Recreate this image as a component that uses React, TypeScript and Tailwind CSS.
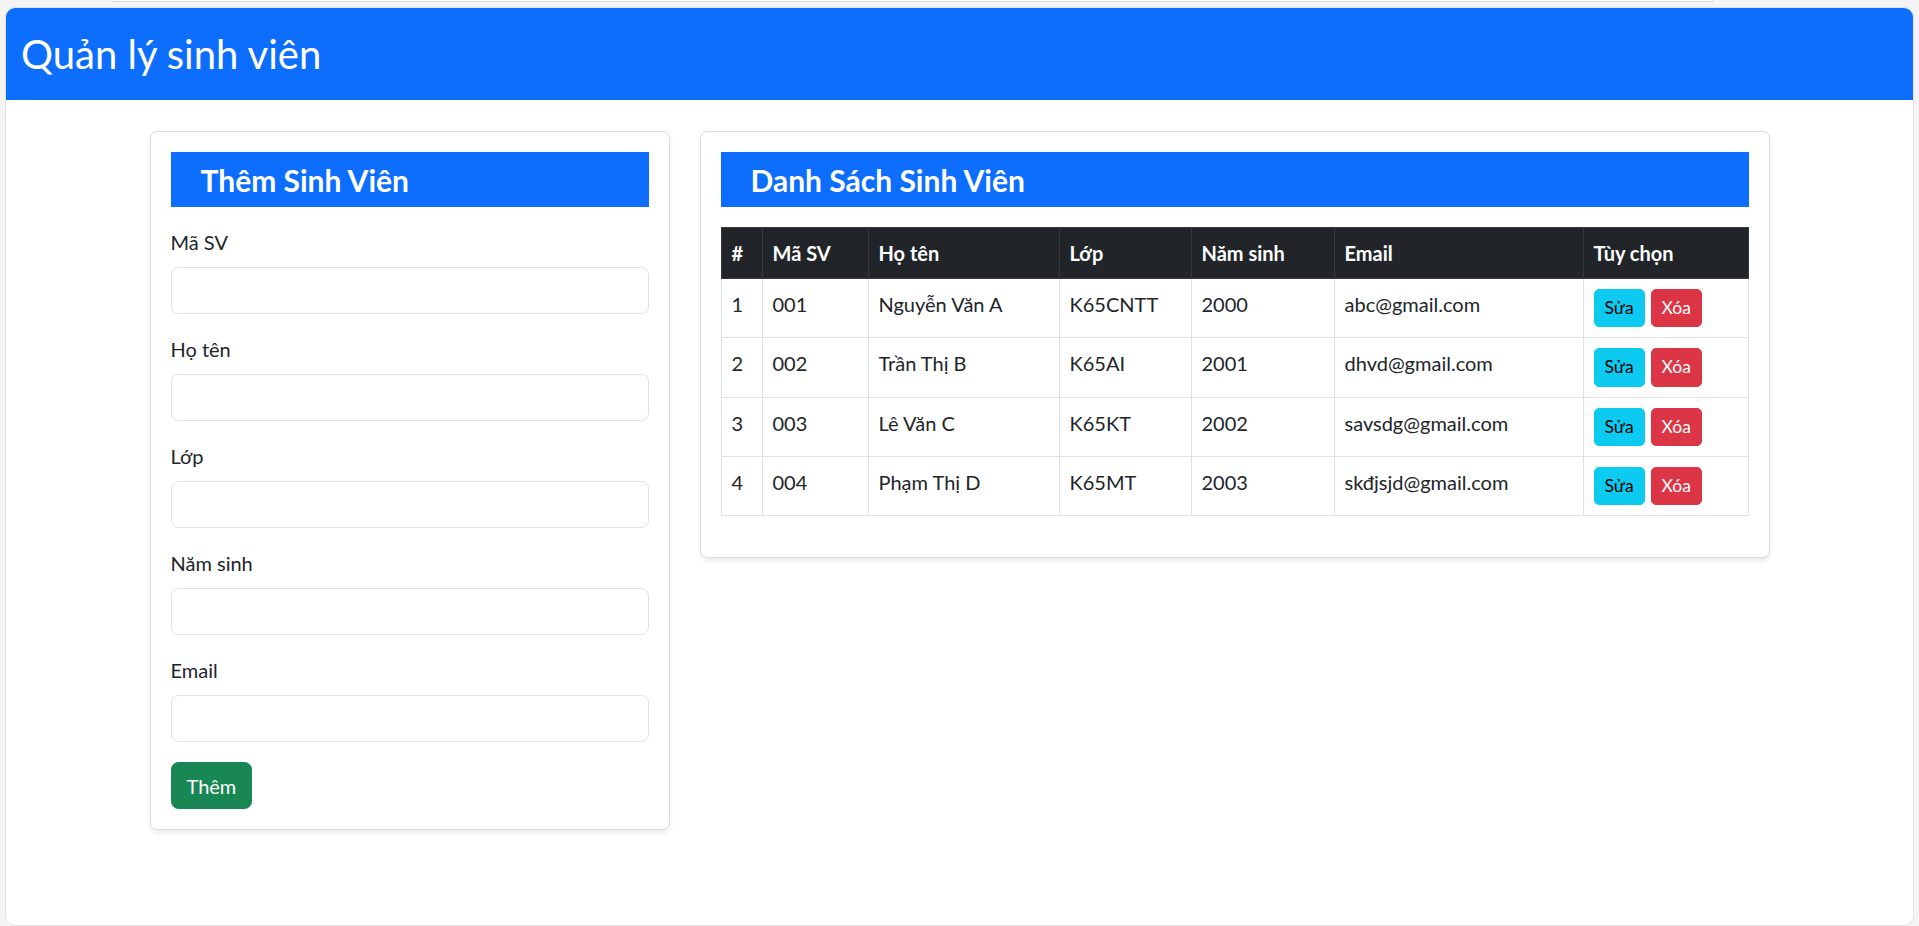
import React from 'react';

type Student = {
  id: number;
  code: string;
  name: string;
  className: string;
  year: string;
  email: string;
};

const students: Student[] = [
  { id: 1, code: '001', name: 'Nguyễn Văn A', className: 'K65CNTT', year: '2000', email: 'abc@gmail.com' },
  { id: 2, code: '002', name: 'Trần Thị B', className: 'K65AI', year: '2001', email: 'dhvd@gmail.com' },
  { id: 3, code: '003', name: 'Lê Văn C', className: 'K65KT', year: '2002', email: 'savsdg@gmail.com' },
  { id: 4, code: '004', name: 'Phạm Thị D', className: 'K65MT', year: '2003', email: 'skđjsjd@gmail.com' },
];

const fields = ['Mã SV', 'Họ tên', 'Lớp', 'Năm sinh', 'Email'];

const App: React.FC = () => {
  return (
    <div className="min-h-screen bg-[#f4f4f4] font-['Lato','Noto_Sans',sans-serif] text-[#212529]">
      {/* remnant of the block above */}
      <div className="ml-[112px] mr-[206px] h-[2px] rounded-b-[8px] border-x border-b border-[#d6d6d6] bg-white"></div>

      <div className="mx-[5px] mt-[5px] h-[919px] rounded-[10px] border border-[#e2e2e2] bg-white">
        {/* Header */}
        <div className="flex h-[92px] items-center rounded-t-[9px] bg-[#0d6efd] px-[15px]">
          <h1 className="text-[40px] font-normal leading-[48px] text-white">Quản lý sinh viên</h1>
        </div>

        <div className="mx-auto w-[1650px] px-[15px] pt-[31px]">
          <div className="flex items-start gap-[30px]">
            {/* Add form */}
            <div className="w-[520px] shrink-0 rounded-[7.5px] border border-[#d9d9d9] bg-white p-[20px] shadow-[0_2.5px_5px_rgba(0,0,0,0.08)]">
              <div className="h-[55px] bg-[#0d6efd] py-[10px] pl-[30px]">
                <h3 className="text-[30px] font-bold leading-[36px] text-white">Thêm Sinh Viên</h3>
              </div>
              <form className="mt-[20px]" onSubmit={(e) => e.preventDefault()}>
                {fields.map((f) => (
                  <div key={f} className="mb-[20px]">
                    <label className="mb-[10px] block text-[20px] leading-[30px]">{f}</label>
                    <input
                      type="text"
                      className="block h-[47px] w-full rounded-[7.5px] border border-[#dee2e6] bg-white px-[15px] text-[20px] outline-none"
                    />
                  </div>
                ))}
                <button
                  type="submit"
                  className="h-[47px] rounded-[7.5px] border border-[#198754] bg-[#198754] px-[15px] text-[20px] leading-[30px] text-white"
                >
                  Thêm
                </button>
              </form>
            </div>

            {/* List */}
            <div className="flex-1 rounded-[7.5px] border border-[#d9d9d9] bg-white p-[20px] shadow-[0_2.5px_5px_rgba(0,0,0,0.08)]">
              <div className="h-[55px] bg-[#0d6efd] py-[10px] pl-[30px]">
                <h3 className="text-[30px] font-bold leading-[36px] text-white">Danh Sách Sinh Viên</h3>
              </div>
              <table className="mb-[21px] mt-[20px] w-full table-fixed border-collapse text-left text-[20px] leading-[30px]">
                <thead>
                  <tr className="bg-[#212529] text-white">
                    <th className="w-[41px] border border-[#373b3e] p-[10px] align-top font-bold">#</th>
                    <th className="w-[106px] border border-[#373b3e] p-[10px] align-top font-bold">Mã SV</th>
                    <th className="w-[191px] border border-[#373b3e] p-[10px] align-top font-bold">Họ tên</th>
                    <th className="w-[132px] border border-[#373b3e] p-[10px] align-top font-bold">Lớp</th>
                    <th className="w-[143px] border border-[#373b3e] p-[10px] align-top font-bold">Năm sinh</th>
                    <th className="w-[249px] border border-[#373b3e] p-[10px] align-top font-bold">Email</th>
                    <th className="border border-[#373b3e] p-[10px] align-top font-bold">Tùy chọn</th>
                  </tr>
                </thead>
                <tbody>
                  {students.map((s) => (
                    <tr key={s.id}>
                      <td className="border border-[#dee2e6] p-[10px] align-top">{s.id}</td>
                      <td className="border border-[#dee2e6] p-[10px] align-top">{s.code}</td>
                      <td className="border border-[#dee2e6] p-[10px] align-top">{s.name}</td>
                      <td className="border border-[#dee2e6] p-[10px] align-top">{s.className}</td>
                      <td className="border border-[#dee2e6] p-[10px] align-top">{s.year}</td>
                      <td className="border border-[#dee2e6] p-[10px] align-top">{s.email}</td>
                      <td className="border border-[#dee2e6] p-[10px] align-top">
                        <div className="flex gap-[6px]">
                          <button className="rounded-[5px] border border-[#0dcaf0] bg-[#0dcaf0] px-[10px] py-[5px] text-[17.5px] leading-[26.25px] text-black">
                            Sửa
                          </button>
                          <button className="rounded-[5px] border border-[#dc3545] bg-[#dc3545] px-[10px] py-[5px] text-[17.5px] leading-[26.25px] text-white">
                            Xóa
                          </button>
                        </div>
                      </td>
                    </tr>
                  ))}
                </tbody>
              </table>
            </div>
          </div>
        </div>
      </div>
    </div>
  );
};

export default App;
